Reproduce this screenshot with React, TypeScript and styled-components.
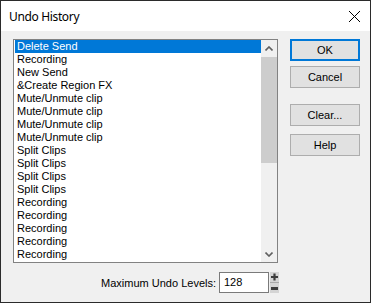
import React from "react";
import styled, { createGlobalStyle } from "styled-components";

const Global = createGlobalStyle`
  html, body { margin: 0; padding: 0; background: #ffffff; }
  body { font-family: "Liberation Sans", Arial, sans-serif; }
`;

const Window = styled.div`
  width: 371px;
  height: 303px;
  box-sizing: border-box;
  border: 1px solid #2b2b2b;
  display: flex;
  flex-direction: column;
  background: #f0f0f0;
  overflow: hidden;
`;

const TitleBar = styled.div`
  height: 30px;
  flex: none;
  background: #ffffff;
  display: flex;
  align-items: center;
  justify-content: space-between;
  padding: 0 8px 0 8px;
  box-sizing: border-box;
`;

const Title = styled.span`
  font-family: "Segoe UI", "Noto Sans", "Open Sans", sans-serif;
  font-size: 12px;
  letter-spacing: -0.35px;
  color: #000000;
  margin-top: 1px;
`;

const CloseBtn = styled.div`
  width: 13px;
  height: 13px;
  margin-right: 1px;
  display: flex;
`;

const Client = styled.div`
  flex: 1;
  display: flex;
  flex-direction: column;
  padding: 8px 10px 0 12px;
`;

const MainRow = styled.div`
  display: flex;
  gap: 12px;
`;

const ListBox = styled.div`
  width: 265px;
  height: 224px;
  box-sizing: border-box;
  border: 1px solid #828282;
  background: #ffffff;
  display: flex;
`;

const Items = styled.div`
  flex: 1;
  padding-left: 1px;
  display: flex;
  flex-direction: column;
`;

const Item = styled.div<{ $selected?: boolean }>`
  height: 13px;
  line-height: 13px;
  font-size: 11px;
  padding-left: 2px;
  white-space: nowrap;
  color: ${(p) => (p.$selected ? "#ffffff" : "#000000")};
  background: ${(p) => (p.$selected ? "#0078d7" : "transparent")};
`;

const ScrollBar = styled.div`
  width: 16px;
  background: #f0f0f0;
  display: flex;
  flex-direction: column;
`;

const Arrow = styled.div`
  height: 16px;
  flex: none;
  display: flex;
  align-items: center;
  justify-content: center;
`;

const Thumb = styled.div`
  margin: 1px 0 0 0;
  height: 106px;
  background: #cdcdcd;
`;

const Track = styled.div`
  flex: 1;
`;

const Buttons = styled.div`
  display: flex;
  flex-direction: column;
`;

const Button = styled.div<{ $default?: boolean; $gap?: number }>`
  width: 70px;
  height: 22px;
  box-sizing: border-box;
  margin-top: ${(p) => p.$gap ?? 0}px;
  background: #e1e1e1;
  border: ${(p) => (p.$default ? "2px solid #0078d7" : "1px solid #adadad")};
  display: flex;
  align-items: center;
  justify-content: center;
  font-size: 11px;
  color: #000000;
`;

const BottomRow = styled.div`
  width: 266px;
  margin-top: 9px;
  display: flex;
  justify-content: flex-end;
  align-items: center;
`;

const Label = styled.span`
  font-size: 11px;
  color: #000000;
  margin-right: 3px;
`;

const Input = styled.div`
  width: 50px;
  height: 21px;
  box-sizing: border-box;
  border: 1px solid #7a7a7a;
  background: #ffffff;
  font-size: 11px;
  line-height: 19px;
  padding-left: 4px;
  color: #000000;
`;

const Spinner = styled.div`
  margin-left: 1px;
  width: 9px;
  height: 21px;
  display: flex;
`;

const items = [
  "Delete Send",
  "Recording",
  "New Send",
  "&Create Region FX",
  "Mute/Unmute clip",
  "Mute/Unmute clip",
  "Mute/Unmute clip",
  "Mute/Unmute clip",
  "Split Clips",
  "Split Clips",
  "Split Clips",
  "Split Clips",
  "Recording",
  "Recording",
  "Recording",
  "Recording",
  "Recording",
];

export default function App() {
  return (
    <>
      <Global />
      <Window>
        <TitleBar>
          <Title>Undo History</Title>
          <CloseBtn>
            <svg width="13" height="13" viewBox="0 0 13 13">
              <path d="M1 1 L12 12 M12 1 L1 12" stroke="#000" strokeWidth="1" fill="none" />
            </svg>
          </CloseBtn>
        </TitleBar>
        <Client>
          <MainRow>
            <ListBox>
              <Items>
                {items.map((t, i) => (
                  <Item key={i} $selected={i === 0}>
                    {t}
                  </Item>
                ))}
              </Items>
              <ScrollBar>
                <Arrow>
                  <svg width="8" height="5" viewBox="0 0 8 5">
                    <path d="M0.5 4.5 L4 1 L7.5 4.5" stroke="#606060" strokeWidth="1.6" fill="none" />
                  </svg>
                </Arrow>
                <Thumb />
                <Track />
                <Arrow>
                  <svg width="8" height="5" viewBox="0 0 8 5">
                    <path d="M0.5 0.5 L4 4 L7.5 0.5" stroke="#606060" strokeWidth="1.6" fill="none" />
                  </svg>
                </Arrow>
              </ScrollBar>
            </ListBox>
            <Buttons>
              <Button $default>OK</Button>
              <Button $gap={5}>Cancel</Button>
              <Button $gap={16}>Clear...</Button>
              <Button $gap={8}>Help</Button>
            </Buttons>
          </MainRow>
          <BottomRow>
            <Label>Maximum Undo Levels:</Label>
            <Input>128</Input>
            <Spinner>
              <svg width="9" height="21" viewBox="0 0 9 21">
                <rect x="0" y="0" width="9" height="10" fill="#d4d4d4" />
                <rect x="0" y="11" width="9" height="10" fill="#d4d4d4" />
                <path d="M4.5 1.5 V8.5 M1 5 H8" stroke="#3c3c3c" strokeWidth="2.2" />
                <path d="M0 10.5 H9" stroke="#a8a8a8" strokeWidth="1" />
                <path d="M1 16.5 H8" stroke="#3c3c3c" strokeWidth="3" />
              </svg>
            </Spinner>
          </BottomRow>
        </Client>
      </Window>
    </>
  );
}
